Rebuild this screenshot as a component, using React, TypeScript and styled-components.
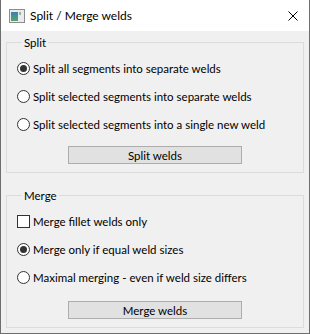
import React, { useState } from 'react'
import styled, { createGlobalStyle } from 'styled-components'

const GlobalStyle = createGlobalStyle`
  html, body {
    margin: 0;
    padding: 0;
    background: #ffffff;
  }
  * {
    box-sizing: border-box;
  }
`

const Window = styled.div`
  width: 310px;
  height: 334px;
  display: flex;
  flex-direction: column;
  border: 1px solid #6e6e6e;
  border-top: none;
  background: #f0f0f0;
  font-family: Lato, 'Noto Sans', 'Liberation Sans', sans-serif;
  font-size: 11.5px;
  color: #000000;
`

const TitleBar = styled.div`
  height: 31px;
  flex: none;
  display: flex;
  align-items: center;
  background: #ffffff;
  padding-left: 8px;
`

const TitleText = styled.span`
  margin-left: 5px;
  font-size: 12px;
  flex: 1;
`

const CloseButton = styled.div`
  width: 32px;
  height: 31px;
  display: flex;
  align-items: center;
  justify-content: center;
`

const Content = styled.div`
  flex: 1;
  display: flex;
  flex-direction: column;
  padding: 4px 5px 0 5px;
`

const Group = styled.fieldset<{ $gap?: number }>`
  margin: 0 0 ${({ $gap }) => $gap ?? 0}px 0;
  padding: 4px 0 8px 10px;
  border: 1px solid #dcdcdc;
  min-width: 0;
`

const Legend = styled.legend`
  margin-left: 5px;
  padding: 0 2px;
  line-height: 15px;
`

const Row = styled.label`
  height: 28px;
  display: flex;
  align-items: center;
  gap: 3px;
  cursor: default;
`

const RadioMark = styled.span<{ $checked: boolean }>`
  width: 13px;
  height: 13px;
  border-radius: 50%;
  border: 1px solid #333333;
  background: #ffffff;
  display: flex;
  align-items: center;
  justify-content: center;
  flex: none;

  &::after {
    content: '';
    width: 7px;
    height: 7px;
    border-radius: 50%;
    background: #333333;
    display: ${({ $checked }) => ($checked ? 'block' : 'none')};
  }
`

const CheckMark = styled.span`
  width: 13px;
  height: 13px;
  border: 1px solid #333333;
  background: #ffffff;
  flex: none;
`

const ButtonRow = styled.div<{ $top: number }>`
  display: flex;
  padding-left: 51px;
  margin-top: ${({ $top }) => $top}px;
`

const Button = styled.button`
  width: 174px;
  height: 18px;
  background: #e1e1e1;
  border: 1px solid #adadad;
  font-family: inherit;
  font-size: 11.5px;
  color: #000000;
  padding: 0;
  line-height: 15px;
`

function AppIcon() {
  return (
    <svg width="16" height="14" viewBox="0 0 16 14">
      <defs>
        <linearGradient id="ig" x1="0" y1="0" x2="0" y2="1">
          <stop offset="0" stopColor="#3f7fb0" />
          <stop offset="1" stopColor="#56a66a" />
        </linearGradient>
      </defs>
      <rect x="0.5" y="0.5" width="15" height="13" fill="#e9ecef" stroke="#8c8c8c" />
      <rect x="2" y="3" width="7" height="9" fill="url(#ig)" />
      <rect x="10" y="3" width="2" height="3" fill="#8fb9a0" />
    </svg>
  )
}

function CloseIcon() {
  return (
    <svg width="10" height="10" viewBox="0 0 10 10">
      <path d="M0.5 0.5 L9.5 9.5 M9.5 0.5 L0.5 9.5" stroke="#000000" strokeWidth="1" />
    </svg>
  )
}

export default function App() {
  const [split, setSplit] = useState(0)
  const [merge, setMerge] = useState(0)
  const [filletOnly, setFilletOnly] = useState(false)

  const splitOptions = [
    'Split all segments into separate welds',
    'Split selected segments into separate welds',
    'Split selected segments into a single new weld'
  ]
  const mergeOptions = ['Merge only if equal weld sizes', 'Maximal merging - even if weld size differs']

  return (
    <>
      <GlobalStyle />
      <Window>
        <TitleBar>
          <AppIcon />
          <TitleText>Split / Merge welds</TitleText>
          <CloseButton>
            <CloseIcon />
          </CloseButton>
        </TitleBar>
        <Content>
          <Group $gap={15}>
            <Legend>Split</Legend>
            {splitOptions.map((text, i) => (
              <Row key={i} onClick={() => setSplit(i)}>
                <RadioMark $checked={split === i} />
                {text}
              </Row>
            ))}
            <ButtonRow $top={8}>
              <Button>Split welds</Button>
            </ButtonRow>
          </Group>
          <Group>
            <Legend>Merge</Legend>
            <Row onClick={() => setFilletOnly(!filletOnly)}>
              <CheckMark />
              Merge fillet welds only
            </Row>
            {mergeOptions.map((text, i) => (
              <Row key={i} onClick={() => setMerge(i)}>
                <RadioMark $checked={merge === i} />
                {text}
              </Row>
            ))}
            <ButtonRow $top={10}>
              <Button>Merge welds</Button>
            </ButtonRow>
          </Group>
        </Content>
      </Window>
    </>
  )
}
